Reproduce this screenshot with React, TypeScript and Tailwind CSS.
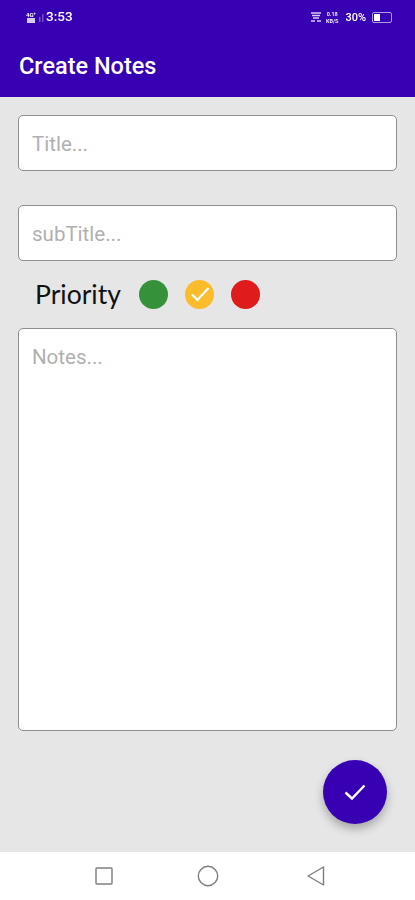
const roboto = "font-['Roboto',sans-serif]";

function StatusBar() {
  return (
    <div className={`flex h-[34px] items-center justify-between pl-[24px] pr-[23px] text-white ${roboto}`}>
      <div className="flex items-center blur-[0.4px]">
        <div className="flex w-[14px] flex-col items-center text-[6px] font-bold leading-[6px]">
          <span>4G⁺</span>
          <span className="h-[5px] w-[8px] bg-white/80" />
        </div>
        <svg width="8" height="10" viewBox="0 0 8 10" className="opacity-30" fill="white">
          <rect x="1" y="5" width="1.5" height="5" />
          <rect x="4" y="2" width="1.5" height="8" />
        </svg>
        <span className="text-[13.5px] font-medium leading-none">3:53</span>
      </div>
      <div className="flex items-center blur-[0.4px]">
        <svg width="12" height="12" viewBox="0 0 12 12" className="mr-[4px] opacity-80" fill="none" stroke="white">
          <path d="M1 2h10M2 4.5h8M3 7h6M1 10h4M7 10h4" strokeWidth="1.4" />
        </svg>
        <div className="mr-[7px] flex flex-col items-center gap-[1px] text-[5.5px] font-bold leading-[6px] opacity-90">
          <span>0.18</span>
          <span>KB/S</span>
        </div>
        <span className="mr-[6px] text-[11px] font-medium leading-none">30%</span>
        <div className="flex h-[11px] w-[20px] items-center rounded-[2px] border border-white/60 p-px">
          <div className="h-full w-[6px] bg-white" />
        </div>
      </div>
    </div>
  );
}

function Field({ label, className }: { label: string; className: string }) {
  return (
    <div className={`rounded-[5px] border-[1.5px] border-[#8f8f8f] bg-white pl-[13px] text-[20.5px] text-[#b0b0b0] ${roboto} ${className}`}>
      {label}
    </div>
  );
}

function NavBar() {
  return (
    <div className="flex h-[48px] items-start bg-white pl-[95px] pt-[15px]">
      <svg width="18" height="18" viewBox="0 0 18 18" fill="none" stroke="#7d7d7d" strokeWidth="1.4">
        <rect x="1" y="1" width="16" height="16" rx="1" />
      </svg>
      <svg width="22" height="22" viewBox="0 0 22 22" fill="none" stroke="#7d7d7d" strokeWidth="1.4" className="ml-[84px] mt-[-2px]">
        <circle cx="11" cy="11" r="9.7" />
      </svg>
      <svg width="20" height="22" viewBox="0 0 20 22" fill="none" stroke="#7d7d7d" strokeWidth="1.4" className="ml-[87px] mt-[-2px]">
        <path d="M17.5 2 L2 11 L17.5 20 Z" strokeLinejoin="round" />
      </svg>
    </div>
  );
}

export default function App() {
  return (
    <div className="flex h-[900px] w-[415px] flex-col overflow-hidden bg-[#e6e6e6]">
      <div className="h-[97px] bg-[#3700b3]">
        <StatusBar />
        <div className={`ml-[19px] mt-[17px] text-[23.5px] font-medium leading-[30px] text-white ${roboto}`}>
          Create Notes
        </div>
      </div>

      <div className="relative flex flex-1 flex-col px-[18px] pt-[18px]">
        <Field label="Title..." className="h-[56px] pt-[14px] leading-[28px]" />
        <Field label="subTitle..." className="mt-[34px] h-[56px] pt-[14px] leading-[28px]" />

        <div className="mt-[16px] flex h-[34px] items-center pl-[17px]">
          <span className="w-[104px] font-['Lato',sans-serif] text-[26.5px] leading-none text-[#111111]">Priority</span>
          <div className="h-[29px] w-[29px] rounded-full bg-[#35923a]" />
          <div className="ml-[17px] flex h-[29px] w-[29px] items-center justify-center rounded-full bg-[#fbbc2c]">
            <svg width="20" height="16" viewBox="0 0 20 16" fill="none" stroke="white" strokeWidth="2.2">
              <path d="M2 8.5 L7.5 14 L18.5 2" />
            </svg>
          </div>
          <div className="ml-[17px] h-[29px] w-[29px] rounded-full bg-[#e01b1b]" />
        </div>

        <Field label="Notes..." className="mt-[17px] h-[403px] pt-[14px] leading-[28px]" />

        <div className="absolute left-[323px] top-[663px] flex h-[64px] w-[64px] items-center justify-center rounded-full bg-[#3700b3] shadow-[0_5px_10px_rgba(0,0,0,0.28)]">
          <svg width="24" height="20" viewBox="0 0 24 20" fill="none" stroke="white" strokeWidth="2.4">
            <path d="M2.5 10.5 L9 16.5 L21.5 3.5" />
          </svg>
        </div>
      </div>

      <NavBar />
    </div>
  );
}
